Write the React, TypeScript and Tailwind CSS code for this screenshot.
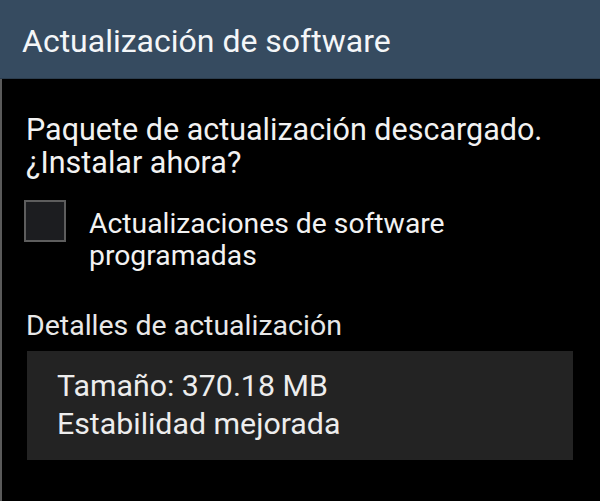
export default function App() {
  return (
    <div className="w-[600px] h-[501px] bg-black flex flex-col overflow-hidden" style={{ fontFamily: "Roboto, 'Noto Sans', sans-serif" }}>
      <div className="h-[79px] bg-[#364b60] border-b border-[#2c3d4e] flex items-center pl-[22px] pt-[3px] shrink-0">
        <span className="text-[32px] text-[#f4f6f8] leading-none">Actualización de software</span>
      </div>
      <div className="flex-1 border-l-2 border-[#5a5a5a] pl-[24px] pr-[25px] flex flex-col">
        <div className="mt-[34px] text-[30.5px] leading-[33px] text-[#f2f2f2]">
          Paquete de actualización descargado.
          <br />
          ¿Instalar ahora?
        </div>
        <div className="mt-[21px] flex items-start">
          <div className="w-[42px] h-[42px] border-2 border-[#5d5d5d] bg-[#1c1d20] shrink-0 -ml-[2px]" />
          <div className="ml-[23px] mt-[8px] text-[28.3px] leading-[32px] text-[#f2f2f2]">
            Actualizaciones de software
            <br />
            programadas
          </div>
        </div>
        <div className="mt-[39px] text-[28.5px] leading-[30px] text-[#e8e8e8]">Detalles de actualización</div>
        <div className="mt-[10px] ml-[1px] w-[546px] h-[109px] bg-[#232323] pl-[30px] pt-[16px] text-[30.3px] leading-[38px] text-[#ededed]">
          <div>Tamaño: 370.18 MB</div>
          <div>Estabilidad mejorada</div>
        </div>
      </div>
    </div>
  );
}
